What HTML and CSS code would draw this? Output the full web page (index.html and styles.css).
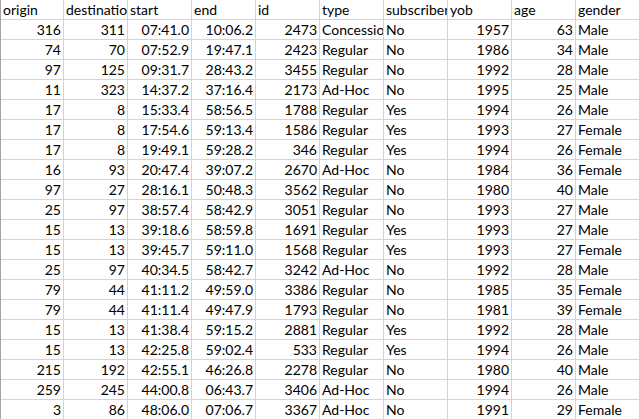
FILE: index.html
```html
<!DOCTYPE html>
<html>
<head>
<meta charset="utf-8">
<link rel="stylesheet" href="styles.css">
</head>
<body>
<div class="sheet">
<div class="row"><div class="c">origin</div><div class="c">destination</div><div class="c">start</div><div class="c">end</div><div class="c">id</div><div class="c">type</div><div class="c">subscriber</div><div class="c">yob</div><div class="c">age</div><div class="c">gender</div></div>
<div class="row"><div class="c n">316</div><div class="c n">311</div><div class="c n">07:41.0</div><div class="c n">10:06.2</div><div class="c n">2473</div><div class="c">Concession</div><div class="c">No</div><div class="c n">1957</div><div class="c n">63</div><div class="c">Male</div></div>
<div class="row"><div class="c n">74</div><div class="c n">70</div><div class="c n">07:52.9</div><div class="c n">19:47.1</div><div class="c n">2423</div><div class="c">Regular</div><div class="c">No</div><div class="c n">1986</div><div class="c n">34</div><div class="c">Male</div></div>
<div class="row"><div class="c n">97</div><div class="c n">125</div><div class="c n">09:31.7</div><div class="c n">28:43.2</div><div class="c n">3455</div><div class="c">Regular</div><div class="c">No</div><div class="c n">1992</div><div class="c n">28</div><div class="c">Male</div></div>
<div class="row"><div class="c n">11</div><div class="c n">323</div><div class="c n">14:37.2</div><div class="c n">37:16.4</div><div class="c n">2173</div><div class="c">Ad-Hoc</div><div class="c">No</div><div class="c n">1995</div><div class="c n">25</div><div class="c">Male</div></div>
<div class="row"><div class="c n">17</div><div class="c n">8</div><div class="c n">15:33.4</div><div class="c n">58:56.5</div><div class="c n">1788</div><div class="c">Regular</div><div class="c">Yes</div><div class="c n">1994</div><div class="c n">26</div><div class="c">Male</div></div>
<div class="row"><div class="c n">17</div><div class="c n">8</div><div class="c n">17:54.6</div><div class="c n">59:13.4</div><div class="c n">1586</div><div class="c">Regular</div><div class="c">Yes</div><div class="c n">1993</div><div class="c n">27</div><div class="c">Female</div></div>
<div class="row"><div class="c n">17</div><div class="c n">8</div><div class="c n">19:49.1</div><div class="c n">59:28.2</div><div class="c n">346</div><div class="c">Regular</div><div class="c">Yes</div><div class="c n">1994</div><div class="c n">26</div><div class="c">Female</div></div>
<div class="row"><div class="c n">16</div><div class="c n">93</div><div class="c n">20:47.4</div><div class="c n">39:07.2</div><div class="c n">2670</div><div class="c">Ad-Hoc</div><div class="c">No</div><div class="c n">1984</div><div class="c n">36</div><div class="c">Female</div></div>
<div class="row"><div class="c n">97</div><div class="c n">27</div><div class="c n">28:16.1</div><div class="c n">50:48.3</div><div class="c n">3562</div><div class="c">Regular</div><div class="c">No</div><div class="c n">1980</div><div class="c n">40</div><div class="c">Male</div></div>
<div class="row"><div class="c n">25</div><div class="c n">97</div><div class="c n">38:57.4</div><div class="c n">58:42.9</div><div class="c n">3051</div><div class="c">Regular</div><div class="c">No</div><div class="c n">1993</div><div class="c n">27</div><div class="c">Male</div></div>
<div class="row"><div class="c n">15</div><div class="c n">13</div><div class="c n">39:18.6</div><div class="c n">58:59.8</div><div class="c n">1691</div><div class="c">Regular</div><div class="c">Yes</div><div class="c n">1993</div><div class="c n">27</div><div class="c">Male</div></div>
<div class="row"><div class="c n">15</div><div class="c n">13</div><div class="c n">39:45.7</div><div class="c n">59:11.0</div><div class="c n">1568</div><div class="c">Regular</div><div class="c">Yes</div><div class="c n">1993</div><div class="c n">27</div><div class="c">Female</div></div>
<div class="row"><div class="c n">25</div><div class="c n">97</div><div class="c n">40:34.5</div><div class="c n">58:42.7</div><div class="c n">3242</div><div class="c">Ad-Hoc</div><div class="c">No</div><div class="c n">1992</div><div class="c n">28</div><div class="c">Male</div></div>
<div class="row"><div class="c n">79</div><div class="c n">44</div><div class="c n">41:11.2</div><div class="c n">49:59.0</div><div class="c n">3386</div><div class="c">Regular</div><div class="c">No</div><div class="c n">1985</div><div class="c n">35</div><div class="c">Female</div></div>
<div class="row"><div class="c n">79</div><div class="c n">44</div><div class="c n">41:11.4</div><div class="c n">49:47.9</div><div class="c n">1793</div><div class="c">Regular</div><div class="c">No</div><div class="c n">1981</div><div class="c n">39</div><div class="c">Female</div></div>
<div class="row"><div class="c n">15</div><div class="c n">13</div><div class="c n">41:38.4</div><div class="c n">59:15.2</div><div class="c n">2881</div><div class="c">Regular</div><div class="c">Yes</div><div class="c n">1992</div><div class="c n">28</div><div class="c">Male</div></div>
<div class="row"><div class="c n">15</div><div class="c n">13</div><div class="c n">42:25.8</div><div class="c n">59:02.4</div><div class="c n">533</div><div class="c">Regular</div><div class="c">Yes</div><div class="c n">1994</div><div class="c n">26</div><div class="c">Male</div></div>
<div class="row"><div class="c n">215</div><div class="c n">192</div><div class="c n">42:55.1</div><div class="c n">46:26.8</div><div class="c n">2278</div><div class="c">Regular</div><div class="c">No</div><div class="c n">1980</div><div class="c n">40</div><div class="c">Male</div></div>
<div class="row"><div class="c n">259</div><div class="c n">245</div><div class="c n">44:00.8</div><div class="c n">06:43.7</div><div class="c n">3406</div><div class="c">Ad-Hoc</div><div class="c">No</div><div class="c n">1994</div><div class="c n">26</div><div class="c">Male</div></div>
<div class="row"><div class="c n">3</div><div class="c n">86</div><div class="c n">48:06.0</div><div class="c n">07:06.7</div><div class="c n">3367</div><div class="c">Ad-Hoc</div><div class="c">No</div><div class="c n">1991</div><div class="c n">29</div><div class="c">Female</div></div>
</div>
</body>
</html>
```

FILE: styles.css
```css
html, body {
  margin: 0;
  padding: 0;
  background: #ffffff;
}

.sheet {
  display: flex;
  flex-direction: column;
  width: 640px;
  border-left: 1px solid #a6a6a6;
  box-sizing: border-box;
  font-family: "Lato", "Liberation Sans", sans-serif;
  font-size: 14px;
  color: #000000;
}

.row {
  display: flex;
  height: 20px;
}

.c {
  width: 64px;
  flex: 0 0 64px;
  box-sizing: border-box;
  height: 20px;
  line-height: 20px;
  padding: 0 2px 0 2px;
  border-right: 1px solid #d4d4d4;
  border-bottom: 1px solid #d4d4d4;
  white-space: nowrap;
  overflow: hidden;
  text-overflow: clip;
  text-align: left;
}

.row .c:first-child {
  width: 63px;
  flex-basis: 63px;
}

.n {
  text-align: right;
}
```
